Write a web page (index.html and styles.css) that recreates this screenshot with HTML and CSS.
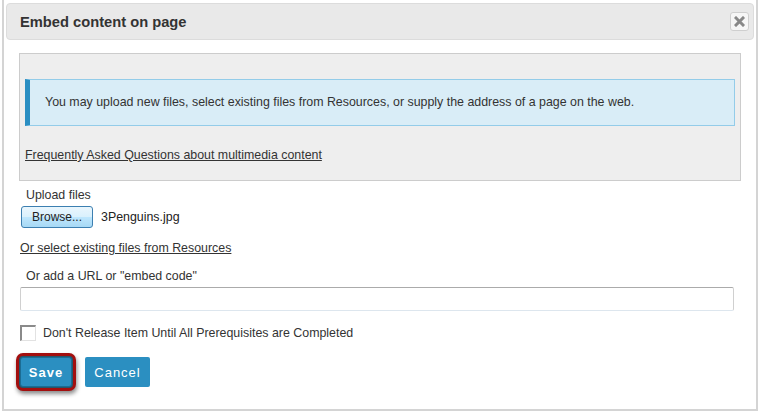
FILE: index.html
```html
<!DOCTYPE html>
<html>
<head>
<meta charset="utf-8">
<link rel="stylesheet" href="styles.css">
</head>
<body>
<div class="dialog">
  <div class="header">
    <span class="title">Embed content on page</span>
    <span class="close">
      <svg width="11" height="11" viewBox="0 0 11 11"><path d="M2 2 L9 9 M9 2 L2 9" stroke="#888888" stroke-width="3" stroke-linecap="square"/></svg>
    </span>
  </div>
  <div class="content">
    <div class="panel">
      <div class="info">You may upload new files, select existing files from Resources, or supply the address of a page on the web.</div>
      <a class="faq" href="#">Frequently Asked Questions about multimedia content</a>
    </div>
    <div class="label first">Upload files</div>
    <div class="filerow">
      <span class="browse">Browse...</span>
      <span class="fname">3Penguins.jpg</span>
    </div>
    <a class="reslink" href="#">Or select existing files from Resources</a>
    <div class="label url">Or add a URL or "embed code"</div>
    <div class="textinput"></div>
    <div class="checkrow">
      <span class="check"></span>
      <span class="checklabel">Don't Release Item Until All Prerequisites are Completed</span>
    </div>
    <div class="buttons">
      <span class="btn save">Save</span>
      <span class="btn cancel">Cancel</span>
    </div>
  </div>
</div>
</body>
</html>
```

FILE: styles.css
```css
html, body {
  margin: 0;
  padding: 0;
  background: #ffffff;
}
body {
  font-family: "Liberation Sans", Arial, sans-serif;
  font-size: 12.4px;
  color: #333333;
}
.dialog {
  margin-left: 2px;
  width: 748px;
  height: 406px;
  padding: 3px 2px 0 2px;
  border-left: 2px solid #d4d4d4;
  border-right: 2px solid #d4d4d4;
  border-bottom: 2px solid #d4d4d4;
  background: #ffffff;
}
.header {
  height: 35px;
  background: #e9e9e9;
  border: 1px solid #dcdcdc;
  border-radius: 4px;
  display: flex;
  align-items: center;
  justify-content: space-between;
  padding: 0 4px 0 13px;
}
.title {
  font-weight: bold;
  font-size: 14.7px;
  color: #333333;
}
.close {
  width: 17px;
  height: 17px;
  border: 1px solid #cfcfcf;
  border-radius: 3px;
  background: #f6f6f6;
  display: flex;
  align-items: center;
  justify-content: center;
}
.content {
  padding: 13px 14px 0 13px;
  display: flex;
  flex-direction: column;
  align-items: flex-start;
}
.panel {
  box-sizing: border-box;
  width: 722px;
  height: 128px;
  border: 1px solid #cccccc;
  background: #eeeeee;
  padding: 25px 5px 0 5px;
}
.info {
  height: 45px;
  line-height: 45px;
  background: #d9edf7;
  border: 1px solid #93cce9;
  border-left: 5px solid #2a8ec2;
  padding-left: 15px;
  color: #333333;
}
.faq {
  display: block;
  margin-top: 22px;
  line-height: 14px;
  color: #333333;
  text-decoration: underline;
}
.label {
  line-height: 14px;
  padding-left: 7px;
}
.label.first {
  margin-top: 7px;
}
.filerow {
  margin-top: 4px;
  margin-left: 2px;
  display: flex;
  align-items: center;
  gap: 8px;
}
.browse {
  box-sizing: border-box;
  width: 72px;
  height: 22px;
  border: 1px solid #3c7fb1;
  border-radius: 3px;
  background: linear-gradient(#eaf6fd 0%, #d9f0fc 50%, #bee6fd 51%, #a7d9f5 100%);
  display: flex;
  align-items: center;
  justify-content: center;
  color: #222222;
  font-size: 12px;
}
.fname {
  color: #222222;
}
.reslink {
  margin-top: 13px;
  margin-left: 1px;
  line-height: 14px;
  color: #333333;
  text-decoration: underline;
}
.label.url {
  margin-top: 14px;
}
.textinput {
  box-sizing: border-box;
  margin-top: 4px;
  margin-left: 1px;
  width: 714px;
  height: 24px;
  border: 1px solid #d0d0d0;
  border-top-color: #ababab;
  border-bottom-color: #dde6ee;
  border-radius: 2px;
  background: #ffffff;
}
.checkrow {
  margin-top: 14px;
  margin-left: 1px;
  display: flex;
  align-items: center;
  gap: 7px;
}
.check {
  box-sizing: border-box;
  width: 16px;
  height: 16px;
  border: 1px solid #e2e2e2;
  border-top: 2px solid #8a8a8a;
  border-left: 2px solid #8a8a8a;
  background: #ffffff;
}
.buttons {
  margin-top: 16px;
  margin-left: 1px;
  display: flex;
  gap: 13px;
}
.btn {
  box-sizing: border-box;
  height: 30px;
  display: flex;
  align-items: center;
  justify-content: center;
  background: #2b8fc1;
  color: #ffffff;
  font-size: 13px;
  letter-spacing: 1px;
  border-radius: 2px;
}
.save {
  width: 52px;
  font-weight: bold;
  border: 1px solid #1c6c93;
  box-shadow: 0 0 0 1px #24576e, 0 0 0 4px #a30f0f, 1px 3px 4px 4px rgba(0, 0, 0, 0.45);
  border-radius: 3px;
}
.cancel {
  width: 65px;
}
```
